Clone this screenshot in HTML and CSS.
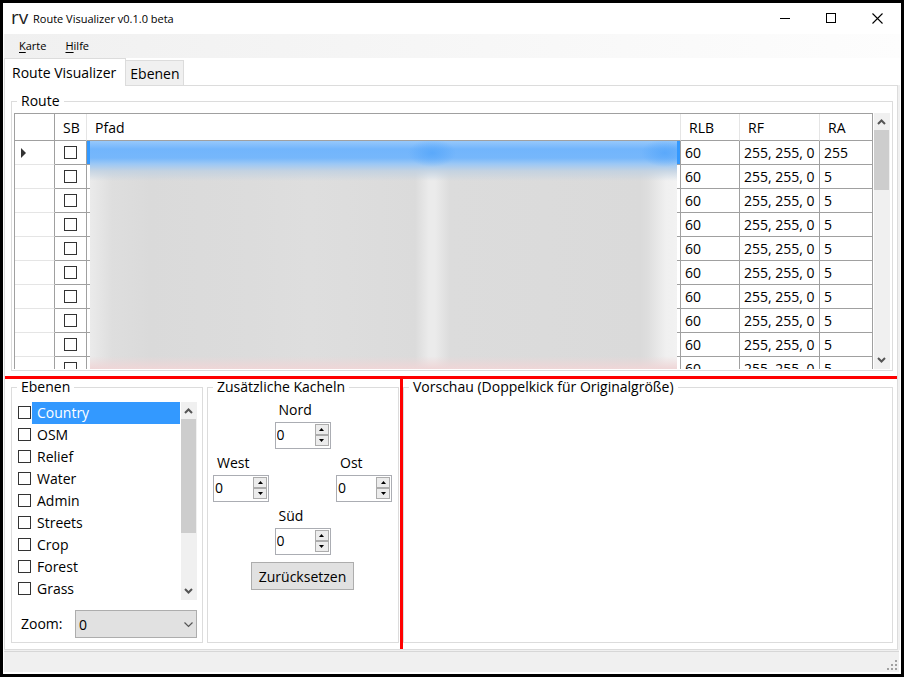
FILE: index.html
```html
<!DOCTYPE html>
<html lang="de">
<head>
<meta charset="utf-8">
<title>Route Visualizer v0.1.0 beta</title>
<link rel="stylesheet" href="styles.css">
</head>
<body>
<div class="window">
  <header class="titlebar">
    <span class="logo">rv</span>
    <h1 class="title">Route Visualizer v0.1.0 beta</h1>
    <button class="win-btn" aria-label="Minimieren"><svg width="11" height="11" shape-rendering="crispEdges"><path d="M0 5.5H10" stroke="#000"/></svg></button>
    <button class="win-btn" aria-label="Maximieren"><svg width="11" height="11" shape-rendering="crispEdges"><path d="M.5 .5H9.500V9.500H.5Z" fill="none" stroke="#000"/></svg></button>
    <button class="win-btn" aria-label="Schließen"><svg width="11" height="11"><path d="M.5 .5L10.500 10.500M10.500 .5L.5 10.500" stroke="#000" stroke-width="1.100"/></svg></button>
  </header>
  <nav class="menu">
    <button><u>K</u>arte</button>
    <button><u>H</u>ilfe</button>
  </nav>
  <div class="tabs" role="tablist">
    <button class="tab active" role="tab" aria-selected="true">Route Visualizer</button>
    <button class="tab" role="tab" aria-selected="false">Ebenen</button>
  </div>
  <main class="pane">
    <fieldset class="group route">
      <legend>Route</legend>
      <div class="grid">
        <div class="table-wrap">
          <table>
            <colgroup><col class="c-head"><col class="c-sb"><col><col class="c-rlb"><col class="c-rf"><col class="c-ra"></colgroup>
            <thead><tr><th></th><th>SB</th><th>Pfad</th><th>RLB</th><th>RF</th><th>RA</th></tr></thead>
            <tbody>
              <tr class="current"><td><svg class="marker" width="5" height="10"><path d="M0 0L5 5L0 10Z" fill="#333"/></svg></td><td><input type="checkbox" aria-label="SB 1"></td><td></td><td>60</td><td>255, 255, 0</td><td>255</td></tr>
              <tr><td></td><td><input type="checkbox" aria-label="SB 2"></td><td></td><td>60</td><td>255, 255, 0</td><td>5</td></tr>
              <tr><td></td><td><input type="checkbox" aria-label="SB 3"></td><td></td><td>60</td><td>255, 255, 0</td><td>5</td></tr>
              <tr><td></td><td><input type="checkbox" aria-label="SB 4"></td><td></td><td>60</td><td>255, 255, 0</td><td>5</td></tr>
              <tr><td></td><td><input type="checkbox" aria-label="SB 5"></td><td></td><td>60</td><td>255, 255, 0</td><td>5</td></tr>
              <tr><td></td><td><input type="checkbox" aria-label="SB 6"></td><td></td><td>60</td><td>255, 255, 0</td><td>5</td></tr>
              <tr><td></td><td><input type="checkbox" aria-label="SB 7"></td><td></td><td>60</td><td>255, 255, 0</td><td>5</td></tr>
              <tr><td></td><td><input type="checkbox" aria-label="SB 8"></td><td></td><td>60</td><td>255, 255, 0</td><td>5</td></tr>
              <tr><td></td><td><input type="checkbox" aria-label="SB 9"></td><td></td><td>60</td><td>255, 255, 0</td><td>5</td></tr>
              <tr><td></td><td><input type="checkbox" aria-label="SB 10"></td><td></td><td>60</td><td>255, 255, 0</td><td>5</td></tr>
            </tbody>
          </table>
          <div class="redacted"></div>
        </div>
        <div class="scroll">
          <svg width="9" height="6"><path d="M1 5L4.500 1.500L8 5" fill="none" stroke="#555" stroke-width="2"/></svg>
          <div class="thumb short"></div>
          <svg width="9" height="6"><path d="M1 1L4.500 4.500L8 1" fill="none" stroke="#555" stroke-width="2"/></svg>
        </div>
      </div>
    </fieldset>
    <div class="split-h"></div>
    <div class="lower">
      <fieldset class="group layers">
        <legend>Ebenen</legend>
        <div class="list-box">
          <div class="list">
            <label class="selected"><input type="checkbox"><span>Country</span></label>
            <label><input type="checkbox"><span>OSM</span></label>
            <label><input type="checkbox"><span>Relief</span></label>
            <label><input type="checkbox"><span>Water</span></label>
            <label><input type="checkbox"><span>Admin</span></label>
            <label><input type="checkbox"><span>Streets</span></label>
            <label><input type="checkbox"><span>Crop</span></label>
            <label><input type="checkbox"><span>Forest</span></label>
            <label><input type="checkbox"><span>Grass</span></label>
          </div>
          <div class="scroll">
            <svg width="9" height="6"><path d="M1 5L4.500 1.500L8 5" fill="none" stroke="#555" stroke-width="2"/></svg>
            <div class="thumb long"></div>
            <svg width="9" height="6"><path d="M1 1L4.500 4.500L8 1" fill="none" stroke="#555" stroke-width="2"/></svg>
          </div>
        </div>
        <div class="zoom">
          <label for="zoom">Zoom:</label>
          <div class="combo">
            <select id="zoom"><option>0</option></select>
            <svg width="9" height="6"><path d="M.5 .5L4.500 4.500L8.500 .5" fill="none" stroke="#555" stroke-width="1.200"/></svg>
          </div>
        </div>
      </fieldset>
      <fieldset class="group tiles">
        <legend>Zusätzliche Kacheln</legend>
        <div class="compass">
          <div class="row">
            <div class="field"><label for="nord">Nord</label>
              <div class="spin"><input id="nord" type="number" value="0"><div class="steps"><button aria-label="Nord erhöhen"><svg width="5" height="3"><path d="M0 3L2.500 0L5 3Z"/></svg></button><button aria-label="Nord verringern"><svg width="5" height="3"><path d="M0 0L2.500 3L5 0Z"/></svg></button></div></div></div>
          </div>
          <div class="row spread">
            <div class="field"><label for="west">West</label>
              <div class="spin"><input id="west" type="number" value="0"><div class="steps"><button aria-label="West erhöhen"><svg width="5" height="3"><path d="M0 3L2.500 0L5 3Z"/></svg></button><button aria-label="West verringern"><svg width="5" height="3"><path d="M0 0L2.500 3L5 0Z"/></svg></button></div></div></div>
            <div class="field"><label for="ost">Ost</label>
              <div class="spin"><input id="ost" type="number" value="0"><div class="steps"><button aria-label="Ost erhöhen"><svg width="5" height="3"><path d="M0 3L2.500 0L5 3Z"/></svg></button><button aria-label="Ost verringern"><svg width="5" height="3"><path d="M0 0L2.500 3L5 0Z"/></svg></button></div></div></div>
          </div>
          <div class="row">
            <div class="field"><label for="sued">Süd</label>
              <div class="spin"><input id="sued" type="number" value="0"><div class="steps"><button aria-label="Süd erhöhen"><svg width="5" height="3"><path d="M0 3L2.500 0L5 3Z"/></svg></button><button aria-label="Süd verringern"><svg width="5" height="3"><path d="M0 0L2.500 3L5 0Z"/></svg></button></div></div></div>
          </div>
          <button class="reset">Zurücksetzen</button>
        </div>
      </fieldset>
      <div class="split-v"></div>
      <fieldset class="group preview">
        <legend>Vorschau (Doppelkick für Originalgröße)</legend>
      </fieldset>
    </div>
  </main>
  <footer class="status">
    <svg width="11" height="11" shape-rendering="crispEdges"><path d="M8 0h2v2h-2zM4 4h2v2h-2zM8 4h2v2h-2zM0 8h2v2h-2zM4 8h2v2h-2zM8 8h2v2h-2z" fill="#a0a0a0"/></svg>
  </footer>
</div>
</body>
</html>
```
FILE: styles.css
```css
* { box-sizing: border-box; }

body {
  margin: 0;
  font: 14px/16px "Open Sans", "Noto Sans", sans-serif;
  color: #000;
}

button, input, select { font: inherit; color: inherit; margin: 0; }
button { padding: 0; border: 0; background: none; }
svg { display: block; flex: none; }

.window {
  display: flex;
  flex-direction: column;
  min-height: 100vh;
  border: 3px solid #000;
  background: #fff;
}

/* Title bar and menu */
.titlebar { display: flex; align-items: center; height: 31px; padding: 0 1px 0 8px; }
.logo { width: 22px; padding-bottom: 4px; font-size: 19px; color: #222; }
.title { flex: 1; margin: 0; font-size: 11px; font-weight: 400; }
.win-btn { display: flex; justify-content: center; align-items: center; width: 46px; height: 31px; }

.menu {
  display: flex;
  gap: 19px;
  height: 24px;
  margin: 0 1px;
  padding-left: 15px;
  background: linear-gradient(90deg, #f0f0f0, #fdfdfd);
  font-size: 11px;
}
.menu u { text-underline-offset: 2px; }

/* Tabs */
.tabs { display: flex; align-items: flex-end; height: 27px; padding-left: 1px; }
.tab {
  height: 25px;
  padding: 2px 3px 0 4px;
  border: 1px solid #dcdcdc;
  border-width: 1px 1px 0 0;
  background: #f0f0f0;
}
.tab.active {
  position: relative;
  height: 28px;
  margin-bottom: -1px;
  padding: 0 9px 0 7px;
  border-left-width: 1px;
  background: #fff;
}

.pane {
  display: flex;
  flex: 1;
  flex-direction: column;
  margin: 0 3px 0 1px;
  padding: 7px 4px 6px 6px;
  border: 1px solid #dcdcdc;
  box-shadow: 2px 0 #f0f0f0;
}

.group { min-width: 0; margin: 0; padding: 7px 5px 4px; border: 1px solid #dcdcdc; }
.group legend { padding: 0 4px; }

/* Route table */
.route { display: flex; flex: 1; flex-direction: column; padding: 4px 2px 1px; }
.route legend { margin-left: 3px; }
.grid { display: flex; flex: 1 0 256px; height: 256px; }
.table-wrap { position: relative; flex: 1; overflow: hidden; height: 256px; }
table {
  width: 100%;
  table-layout: fixed;
  border-collapse: separate;
  border-spacing: 0;
  border: 1px solid #a0a0a0;
  border-width: 1px 0 0 1px;
}
.c-head { width: 40px; }
.c-sb { width: 32px; }
.c-rlb { width: 59px; }
.c-rf { width: 80px; }
.c-ra { width: 53px; }
th, td { padding: 0 4px; text-align: left; white-space: nowrap; border: 0 solid #a0a0a0; border-width: 0 1px 1px 0; }
th { height: 27px; padding: 2px 8px 0; font-weight: 400; border-right-color: #e5e5e5; }
th:first-child, th:last-child { border-right-color: #a0a0a0; }
td { height: 24px; padding-top: 1px; }
td:first-child { padding: 1px 6px 0; border-bottom-color: #e5e5e5; }
td:nth-child(2) { padding: 0 9px; }
.current td:nth-child(3) { background: #3399ff; }

input[type="checkbox"] {
  display: block;
  flex: none;
  appearance: none;
  width: 13px;
  height: 13px;
  border: 1px solid #333;
  background: #fff;
}

.redacted {
  position: absolute;
  top: 28px;
  bottom: 0;
  left: 76px;
  right: 196px;
  background:
    radial-gradient(24px 14px at 342px 12px, rgba(80, 163, 250, .7), rgba(80, 163, 250, 0)),
    radial-gradient(24px 14px at 575px 12px, rgba(80, 163, 250, .7), rgba(80, 163, 250, 0)),
    linear-gradient(#96c8fb 0, #72b5fc 8px, #76b7fb 17px, #9cc8f5 23px, rgba(190, 208, 226, .8) 30px, rgba(220, 220, 220, 0) 40px),
    linear-gradient(rgba(240, 214, 214, 0) 215px, #efd6d7 228px),
    linear-gradient(90deg, #ebebeb 0, #dedede 22px, #dadada 60px, #dcdcdc 160px, #dedede 220px, #dbdbdb 325px, #ebebeb 339px, #ebebeb 345px, #dcdcdc 360px, #dadada 550px, #dedede 558px, #f0f0f0 576px, #f2f2f2);
}

/* Scroll bars */
.scroll {
  display: flex;
  flex-direction: column;
  align-items: center;
  flex: none;
  width: 16px;
  margin-left: 1px;
  padding: 6px 0;
  background: #f0f0f0;
}
.scroll svg { margin-right: 1px; }
.thumb { width: 15px; margin: 5px 1px auto 0; background: #cdcdcd; }
.thumb.short { height: 60px; }
.thumb.long { height: 114px; }

/* Splitters */
.split-h { height: 3px; margin: 5px -4px 0 -6px; background: #f00; }
.split-v { width: 3px; margin: 0 0 -6px 1px; background: #f00; }

.lower { display: flex; }

/* Layer list */
.layers { width: 192px; margin-right: 4px; }
.list-box { display: flex; }
.list { flex: 1; }
.list label { display: flex; align-items: center; gap: 1px; height: 22px; padding: 0 0 1px 1px; }
.list span { flex: 1; align-self: flex-start; padding-left: 5px; line-height: 22px; }
.list .selected span { background: #3399ff; color: #fff; }

.zoom { display: flex; align-items: center; margin-top: 10px; padding-left: 4px; }
.zoom label { width: 54px; }
.combo { position: relative; flex: 1; }
.combo select {
  display: block;
  appearance: none;
  width: 100%;
  height: 28px;
  padding: 1px 3px 0;
  border: 1px solid #adadad;
  border-radius: 0;
  background: #e1e1e1;
}
.combo svg { position: absolute; right: 4px; top: 12px; pointer-events: none; }

/* Extra tiles */
.tiles { width: 192px; }
.compass { display: flex; flex-direction: column; gap: 6px; margin-right: 1px; }
.row { display: flex; justify-content: center; }
.spread { justify-content: space-between; }
.field { width: 56px; }
.field label { display: block; margin-bottom: 4px; padding-left: 4px; }
.spin { display: flex; height: 27px; padding: 1px 1px 2px; border: 1px solid #abadb3; }
.spin input {
  flex: 1;
  min-width: 0;
  padding: 0;
  border: 0;
  outline: 0;
  appearance: textfield;
  background: none;
}
.spin input::-webkit-inner-spin-button { display: none; }
.steps { display: flex; flex-direction: column; width: 14px; }
.steps button {
  display: flex;
  flex: 1;
  align-items: center;
  justify-content: center;
  border: 1px solid #acacac;
  background: #ececec;
}
.reset {
  align-self: center;
  width: 103px;
  height: 28px;
  margin-top: 1px;
  padding-top: 1px;
  border: 1px solid #adadad;
  background: #e1e1e1;
}

.preview { flex: 1; }

/* Status bar */
.status {
  display: flex;
  justify-content: flex-end;
  align-items: flex-end;
  height: 22px;
  margin: 0 2px 2px 1px;
  padding: 0 1px 1px;
  background: linear-gradient(#f0f0f0 1px, #d7d7d7 1px, #d7d7d7 2px, #f0f0f0 2px);
}
```
